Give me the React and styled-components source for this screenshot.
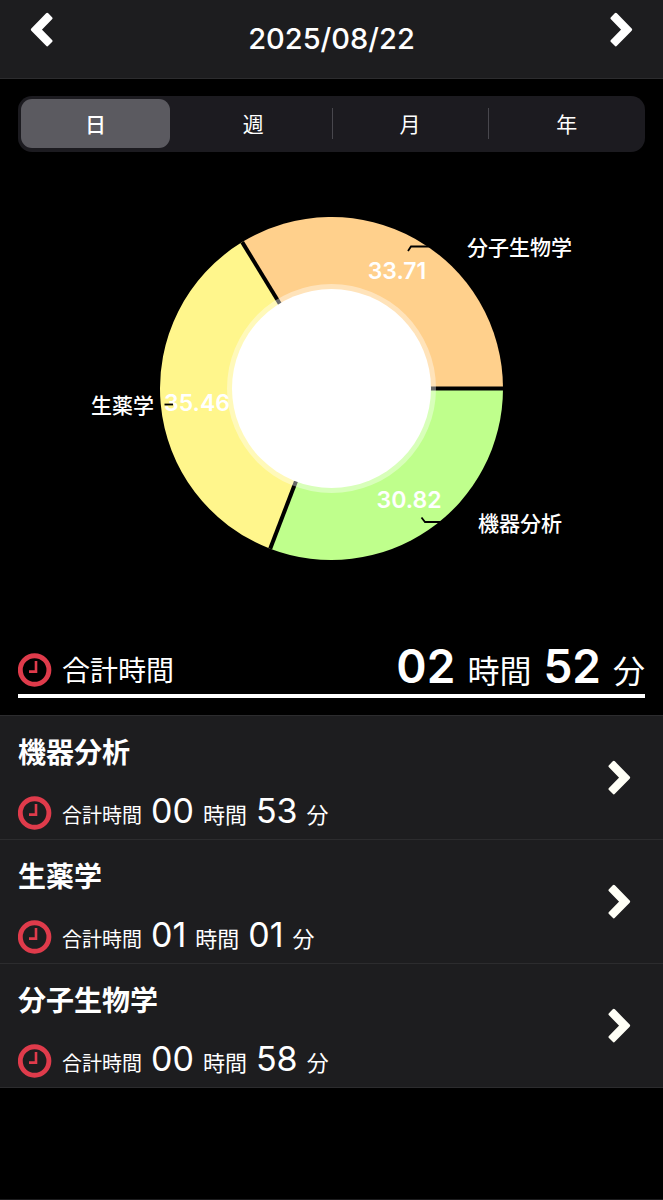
import React, { useState } from 'react';
import styled, { createGlobalStyle } from 'styled-components';

const GlobalStyle = createGlobalStyle`
  * {
    box-sizing: border-box;
  }

  body {
    margin: 0;
    background: #000;
    color: #fff;
    font-family: Inter, 'Noto Sans CJK JP', sans-serif;
  }
`;

const Page = styled.div`
  min-height: 100vh;
  border-bottom: 1px solid #1d1d1f;
`;

const Header = styled.header`
  display: flex;
  justify-content: space-between;
  align-items: flex-start;
  height: 79px;
  padding: 12px 30px 0;
  background: #1d1d1f;
  border-bottom: 1px solid #2c2c2e;
`;

const DateTitle = styled.h1`
  margin: 9px 0 0;
  font-size: 29px;
  font-weight: 500;
  line-height: 36px;
`;

const PlainButton = styled.button`
  border: none;
  padding: 0;
  background: none;
  color: inherit;
  font: inherit;
  cursor: pointer;
`;

const NavButton = styled(PlainButton)`
  display: flex;
  height: 36px;
`;

const Tabs = styled.div`
  display: grid;
  grid-template-columns: repeat(4, 1fr);
  height: 56px;
  margin: 17px 18px 0;
  padding: 3px 0 4px;
  border-radius: 14px;
  background: #1c1b20;
`;

const TabCell = styled.div`
  display: grid;
  position: relative;

  &:nth-child(n + 3)::before {
    content: '';
    position: absolute;
    left: 0;
    top: 9px;
    bottom: 9px;
    width: 1px;
    background: #48474d;
  }
`;

const Tab = styled(PlainButton)`
  margin: ${({ $active }) => ($active ? '0 5px 0 3px' : '0')};
  padding-bottom: 2px;
  border-radius: 11px;
  background: ${({ $active }) => ($active ? '#5b5a60' : 'transparent')};
  font-size: 21px;
  font-weight: ${({ $active }) => ($active ? 500 : 400)};
`;

const ChartArea = styled.section`
  display: flex;
  justify-content: center;
  height: 473px;
  padding-top: 65px;
`;

const Chart = styled.svg`
  display: block;
  flex-shrink: 0;
`;

const Label = styled.text`
  fill: #fff;
  font-size: 21px;
  font-weight: 500;
`;

const Value = styled.text`
  fill: #fff;
  font-size: 23px;
  font-weight: 600;
`;

const Total = styled.section`
  display: flex;
  align-items: flex-end;
  gap: 10px;
  height: 73px;
  margin: 0 18px;
  padding-bottom: 6px;
  border-bottom: 4px solid #fff;
`;

const TotalLabel = styled.span`
  flex: 1;
  font-size: 28px;
  line-height: 34px;
`;

const Time = styled.span`
  display: flex;
  align-items: baseline;
  gap: ${({ $large }) => ($large ? 12 : 9)}px;
  line-height: ${({ $large }) => ($large ? 32 : 30)}px;
`;

const Digits = styled.span`
  font-size: ${({ $large }) => ($large ? 46 : 34)}px;
  font-weight: ${({ $large }) => ($large ? 600 : 400)};
`;

const Unit = styled.span`
  font-size: ${({ $large }) => ($large ? 32 : 22)}px;
`;

const TimeLabel = styled.span`
  font-size: 20px;
`;

const List = styled.ul`
  list-style: none;
  margin: 17px 0 0;
  padding: 0;
  border-top: 1px solid #2c2c2e;
  background: #1d1d1f;
`;

const Row = styled(PlainButton)`
  display: flex;
  justify-content: space-between;
  align-items: center;
  width: 100%;
  height: 124px;
  padding: 0 32px 0 18px;
  border-bottom: 1px solid #2c2c2e;
  text-align: left;
`;

const RowBody = styled.span`
  display: flex;
  flex-direction: column;
  gap: 24px;
  padding-top: 10px;
`;

const Subject = styled.span`
  font-size: 28px;
  font-weight: 700;
  line-height: 36px;
`;

const RowTime = styled.span`
  display: flex;
  align-items: flex-end;
  gap: 10px;
`;

const slices = [
  { name: '機器分析', value: 30.82, color: '#bfff8c' },
  { name: '生薬学', value: 35.46, color: '#fff68c' },
  { name: '分子生物学', value: 33.71, color: '#ffd08c' },
];

const subjects = [
  { name: '機器分析', hours: '00', minutes: '53' },
  { name: '生薬学', hours: '01', minutes: '01' },
  { name: '分子生物学', hours: '00', minutes: '58' },
];

const tabs = ['日', '週', '月', '年'];

const CX = 331.5;
const CY = 171.5;
const R = 171.5;

const point = (percent) => {
  const a = (percent / 100) * Math.PI * 2;
  return [CX + R * Math.cos(a), CY + R * Math.sin(a)];
};

const ClockIcon = () => (
  <svg width="34" height="36" viewBox="0 0 34 36" fill="none" stroke="#df3b4b" aria-hidden="true">
    <circle cx="16.6" cy="18" r="14.3" strokeWidth="4.9" />
    <path d="M18 9V19.6H11" strokeWidth="2.6" />
  </svg>
);

const Chevron = ({ left, color = '#fff' }) => (
  <svg width="23" height="36" viewBox="0 0 23 36" fill={color} stroke={color} strokeWidth="3" strokeLinejoin="round" aria-hidden="true">
    <path
      d={
        left
          ? 'M17.2 2.4L21 6.2L9.8 17.6L21 29L17.2 32.8L2.4 17.6Z'
          : 'M5.8 2.4L2 6.2L13.2 17.6L2 29L5.8 32.8L20.6 17.6Z'
      }
    />
  </svg>
);

const DonutChart = () => {
  let sum = 0;
  const parts = slices.map((s) => {
    const start = sum;
    sum += s.value;
    return { ...s, start, end: sum };
  });

  return (
    <Chart width="663" height="343" viewBox="0 0 663 343" role="img" aria-label="科目別の割合">
      {parts.map(({ name, color, start, end }) => {
        const [x1, y1] = point(start);
        const [x2, y2] = point(end);
        return <path key={name} fill={color} d={`M${CX} ${CY}L${x1} ${y1}A${R} ${R} 0 0 1 ${x2} ${y2}Z`} />;
      })}
      {parts.map(({ name, start }) => {
        const [x, y] = point(start);
        return <path key={name} stroke="#000" strokeWidth="4" d={`M${CX} ${CY}L${x} ${y}`} />;
      })}
      <circle cx={CX} cy={CY} r="104.5" fill="#fff" fillOpacity="0.4" />
      <circle cx={CX} cy={CY} r="99.5" fill="#fff" />
      <Value x="397" y="62" textAnchor="middle">33.71</Value>
      <Value x="197" y="194" textAnchor="middle">35.46</Value>
      <Value x="409" y="291" textAnchor="middle">30.82</Value>
      <g fill="none" stroke="#000" strokeWidth="1.8">
        <path d="M408 34L411 29.5H430" />
        <path d="M421.5 300.5L425 305H442" />
        <path d="M164.5 187.5H173" />
      </g>
      <Label x="467" y="38">分子生物学</Label>
      <Label x="91" y="196">生薬学</Label>
      <Label x="478" y="314">機器分析</Label>
    </Chart>
  );
};

const Duration = ({ hours, minutes, large, label }) => (
  <Time $large={large}>
    {label && <TimeLabel>{label}</TimeLabel>}
    <Digits $large={large}>{hours}</Digits>
    <Unit $large={large}>時間</Unit>
    <Digits $large={large}>{minutes}</Digits>
    <Unit $large={large}>分</Unit>
  </Time>
);

const App = () => {
  const [active, setActive] = useState('日');

  return (
    <Page>
      <GlobalStyle />
      <Header>
        <NavButton aria-label="前の日">
          <Chevron left />
        </NavButton>
        <DateTitle>2025/08/22</DateTitle>
        <NavButton aria-label="次の日">
          <Chevron />
        </NavButton>
      </Header>
      <Tabs>
        {tabs.map((tab) => (
          <TabCell key={tab}>
            <Tab $active={tab === active} aria-pressed={tab === active} onClick={() => setActive(tab)}>
              {tab}
            </Tab>
          </TabCell>
        ))}
      </Tabs>
      <ChartArea>
        <DonutChart />
      </ChartArea>
      <Total>
        <ClockIcon />
        <TotalLabel>合計時間</TotalLabel>
        <Duration hours="02" minutes="52" large />
      </Total>
      <List>
        {subjects.map(({ name, hours, minutes }) => (
          <li key={name}>
            <Row>
              <RowBody>
                <Subject>{name}</Subject>
                <RowTime>
                  <ClockIcon />
                  <Duration label="合計時間" hours={hours} minutes={minutes} />
                </RowTime>
              </RowBody>
              <Chevron color="#fffff6" />
            </Row>
          </li>
        ))}
      </List>
    </Page>
  );
};

export default App;
